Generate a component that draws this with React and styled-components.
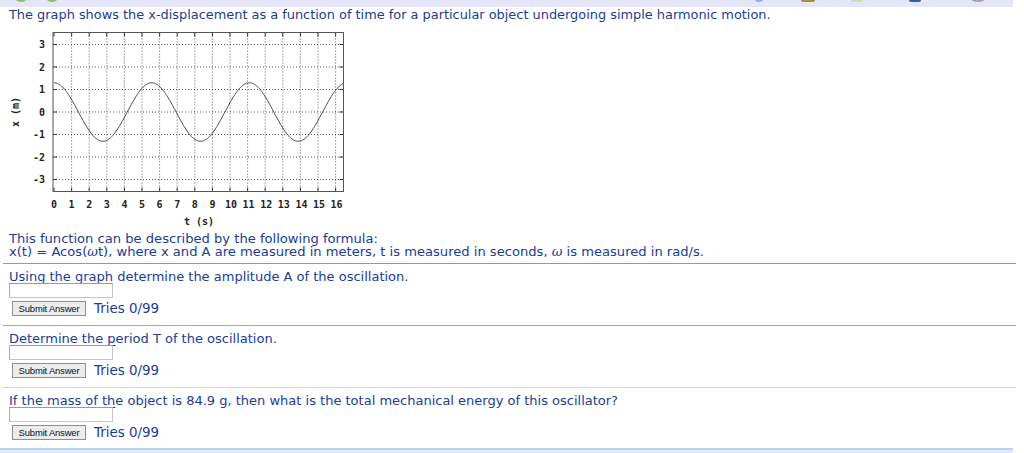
import React from "react";
import styled, { createGlobalStyle } from "styled-components";

const Global = createGlobalStyle`
  html, body { margin: 0; padding: 0; background: #fff; }
  body { font-family: "DejaVu Sans", Verdana, sans-serif; overflow: hidden; }
`;

const Page = styled.div`
  width: 1024px;
  height: 453px;
  display: flex;
  flex-direction: column;
  overflow: hidden;
`;

const Toolbar = styled.div`
  position: relative;
  height: 7px;
  width: 1013px;
  background: #e6e6fa;
  flex: none;
`;

const ToolIcon = styled.span`
  position: absolute;
  top: -7px;
  width: ${(p) => p.w || 12}px;
  height: 9px;
  border-radius: ${(p) => (p.round ? "50%" : "2px")};
  background: ${(p) => p.c};
`;

const Content = styled.div`
  padding-left: 9px;
  display: flex;
  flex-direction: column;
  flex: 1;
`;

const Heading = styled.div`
  font-size: 12.9px;
  line-height: 15px;
  color: #1a3c96;
  white-space: nowrap;
`;

const GraphSvg = styled.svg`
  display: block;
  width: 360px;
  height: 210px;
`;

const Formula = styled.div`
  font-size: 13.1px;
  line-height: 13px;
  color: #1a3c96;
  white-space: nowrap;
`;

const Omega = styled.i`
  font-family: "DejaVu Serif", serif;
`;

const Section = styled.div`
  border-top: 1px solid ${(p) => p.line || "#a8a8a8"};
  margin-top: ${(p) => p.mt || 0}px;
  margin-left: -6px;
  padding-left: 6px;
  width: 1007px;
  padding-top: 6px;
  padding-bottom: 9px;
  display: flex;
  flex-direction: column;
`;

const Question = styled.div`
  font-size: 13px;
  line-height: 14px;
  color: #1a3c96;
  white-space: nowrap;
`;

const Under = styled.span`
  text-decoration: underline;
  text-underline-offset: 2px;
`;

const Input = styled.div`
  margin-top: -1px;
  width: 104px;
  height: 15px;
  box-sizing: border-box;
  border: 1px solid #c4c4c4;
  border-top-color: #9a9a9a;
  border-left-color: #b0b0b0;
  background: #fff;
`;

const SubmitRow = styled.div`
  margin-top: 3px;
  height: 15px;
  display: flex;
  align-items: center;
  gap: 8px;
  padding-left: 3px;
`;

const Button = styled.div`
  box-sizing: border-box;
  width: 74px;
  height: 15px;
  border: 1px solid #8f8f8f;
  background: #ececec;
  font-family: "Liberation Sans", Arial, sans-serif;
  font-size: 9.5px;
  line-height: 13px;
  text-align: center;
  color: #111;
  letter-spacing: -0.2px;
`;

const Tries = styled.span`
  font-size: 13.4px;
  color: #1a3c96;
  line-height: 15px;
`;

const BottomBar = styled.div`
  margin-top: -1px;
  height: 6px;
  width: 1013px;
  background: #e8e8fb;
  border-top: 2px solid #b5d3f5;
  flex: none;
`;

// graph coordinates (svg local; svg left = page x 9, top = page y 22)
const X0 = 45;
const SX = 17.6;
const Y0 = 90;
const SY = 22.5;
const LEFT = 44;
const RIGHT = 334.5;
const TOP = 10.5;
const BOTTOM = 169.5;

function curvePath() {
  const pts = [];
  const tMax = (RIGHT - X0) / SX;
  for (let i = 0; i <= 400; i++) {
    const t = (tMax * i) / 400;
    const v = 1.3 * Math.cos((2 * Math.PI * t) / 5.55);
    pts.push(`${(X0 + t * SX).toFixed(2)},${(Y0 - v * SY).toFixed(2)}`);
  }
  return "M" + pts.join(" L");
}

const tickFont = {
  fontFamily: '"DejaVu Sans Mono", monospace',
  fontWeight: "bold",
  fontSize: "10px",
  fill: "#222",
};

function Graph() {
  const xs = Array.from({ length: 17 }, (_, i) => i);
  const ys = [3, 2, 1, 0, -1, -2, -3];
  return (
    <GraphSvg viewBox="0 0 360 210">
      {xs.slice(1).map((i) => (
        <line
          key={"vx" + i}
          x1={X0 + i * SX}
          x2={X0 + i * SX}
          y1={TOP}
          y2={BOTTOM}
          stroke="#333"
          strokeWidth="0.8"
          strokeDasharray="1 2"
        />
      ))}
      {ys.map((v) => (
        <line
          key={"hy" + v}
          x1={LEFT}
          x2={RIGHT}
          y1={Y0 - v * SY}
          y2={Y0 - v * SY}
          stroke="#333"
          strokeWidth="0.8"
          strokeDasharray="1 2"
        />
      ))}
      {xs.map((i) => (
        <g key={"t" + i}>
          <line x1={X0 + i * SX} x2={X0 + i * SX} y1={TOP} y2={TOP + 4} stroke="#333" strokeWidth="1" />
          <line x1={X0 + i * SX} x2={X0 + i * SX} y1={BOTTOM} y2={BOTTOM - 4} stroke="#333" strokeWidth="1" />
        </g>
      ))}
      {ys.map((v) => (
        <g key={"ty" + v}>
          <line x1={LEFT} x2={LEFT + 4} y1={Y0 - v * SY} y2={Y0 - v * SY} stroke="#333" />
          <line x1={RIGHT} x2={RIGHT - 4} y1={Y0 - v * SY} y2={Y0 - v * SY} stroke="#333" />
        </g>
      ))}
      <rect x={LEFT} y={TOP} width={RIGHT - LEFT} height={BOTTOM - TOP} fill="none" stroke="#555" strokeWidth="1" />
      <path d={curvePath()} fill="none" stroke="#444" strokeWidth="1" />
      {ys.map((v) => (
        <text key={"ly" + v} x={36} y={Y0 - v * SY + 3.5} textAnchor="end" style={tickFont}>
          {v}
        </text>
      ))}
      {xs.map((i) => (
        <text key={"lx" + i} x={X0 + i * SX + (i >= 10 ? 1 : 0)} y={185.5} textAnchor="middle" style={tickFont}>
          {i}
        </text>
      ))}
      <text x={190} y={203} textAnchor="middle" style={tickFont}>
        t (s)
      </text>
      <text x={10} y={90} textAnchor="middle" style={tickFont} transform="rotate(-90 10 90)">
        x (m)
      </text>
    </GraphSvg>
  );
}

function QuestionBlock({ lead, rest, line, mt }) {
  return (
    <Section line={line} mt={mt}>
      <Question>
        <Under>{lead}</Under>
        {rest}
      </Question>
      <Input />
      <SubmitRow>
        <Button>Submit Answer</Button>
        <Tries>Tries 0/99</Tries>
      </SubmitRow>
    </Section>
  );
}

export default function App() {
  return (
    <Page>
      <Global />
      <Toolbar>
        <ToolIcon style={{ left: 15 }} c="#8fbf6a" round />
        <ToolIcon style={{ left: 46 }} c="#8fbf6a" round />
        <ToolIcon style={{ left: 754 }} c="#8ab0e6" round w={10} />
        <ToolIcon style={{ left: 801 }} c="#a89040" w={14} />
        <ToolIcon style={{ left: 851 }} c="#c4e0b4" w={12} />
        <ToolIcon style={{ left: 909 }} c="#3a5a9a" w={12} />
        <ToolIcon style={{ left: 970 }} c="#a6a6a6" round w={16} />
      </Toolbar>
      <Content>
        <Heading>
          The graph shows the x-displacement as a function of time for a particular object undergoing simple harmonic motion.
        </Heading>
        <Graph />
        <Formula>This function can be described by the following formula:</Formula>
        <Formula>
          x(t) = Acos(<Omega>ω</Omega>t), where x and A are measured in meters, t is measured in seconds, <Omega>ω</Omega> is measured in rad/s.
        </Formula>
        <QuestionBlock
          mt={5}
          line="#9a9a9a"
          lead="Using the graph"
          rest=" determine the amplitude A of the oscillation."
        />
        <QuestionBlock line="#a8a8a8" lead="Determine the p" rest="eriod T of the oscillation." />
        <QuestionBlock
          line="#d4d4d4"
          lead="If the mass of th"
          rest="e object is 84.9 g, then what is the total mechanical energy of this oscillator?"
        />
      </Content>
      <BottomBar />
    </Page>
  );
}
